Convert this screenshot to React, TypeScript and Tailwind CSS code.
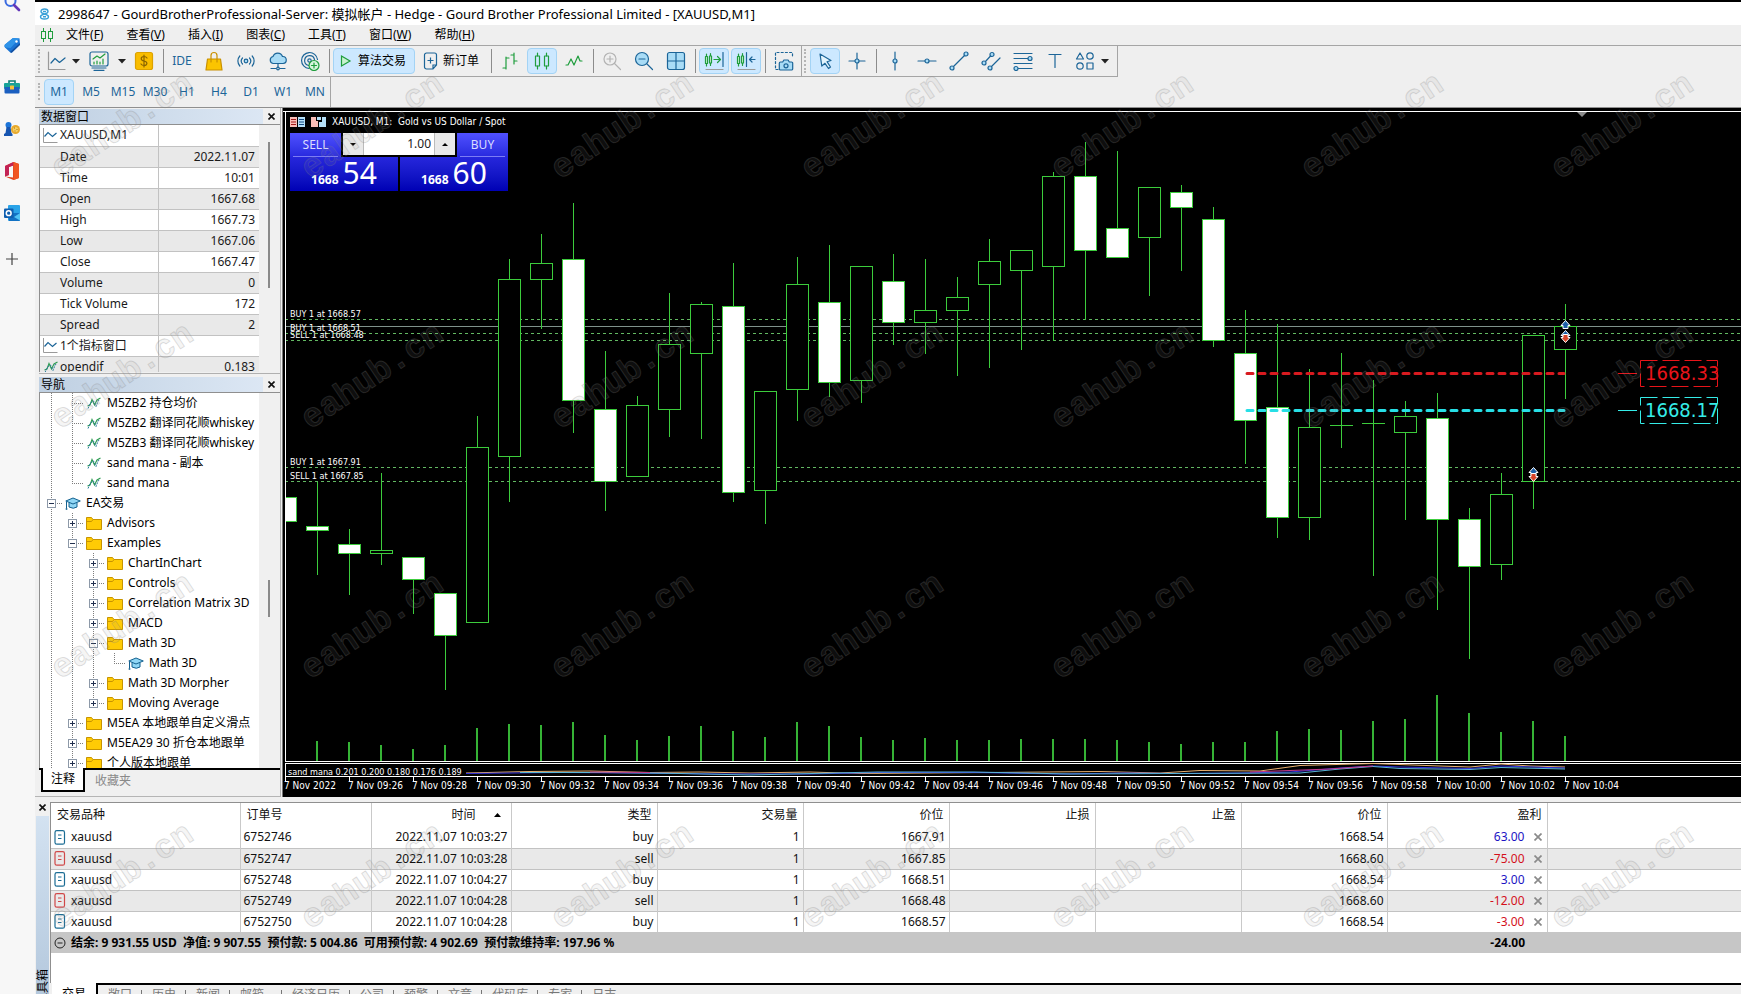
import React from "react";

const BLUE = "#1c6598";
const GREEN = "#1f9d3d";
const PALE = "#a9dcf6";

/* ---------- shared icons ---------- */

type IconProps = { children: React.ReactNode; size?: number; stroke?: string };

function Icon({ children, size = 20, stroke = BLUE }: IconProps) {
  return (
    <svg width={size} height={size} viewBox="0 0 20 20" fill="none" stroke={stroke} strokeWidth="1.2" strokeLinecap="round" strokeLinejoin="round" aria-hidden="true">
      {children}
    </svg>
  );
}

function Folder() {
  return (
    <svg width="16" height="13" viewBox="0 0 16 13" aria-hidden="true">
      <path d="M.5 12.500V.5H5.500L7 2.500H15.500V12.500Z" fill="#ffcb05" stroke="#c79400" />
      <path d="M1 4.500H5.500L7 2.500" fill="none" stroke="#c79400" />
    </svg>
  );
}

function Hat() {
  return (
    <svg width="16" height="13" viewBox="0 0 16 13" fill="#8fd6f5" stroke="#13608f" strokeLinejoin="round" aria-hidden="true">
      <path d="M4 5.500V10Q8.500 12.500 12 10V5.500" />
      <path d="M.8 4 8 1 15.300 4 8 7Z" />
      <path d="M1.500 4.500V11.500" fill="none" />
      <path d="M.7 12h1.600" strokeWidth="1.600" />
    </svg>
  );
}

function Wave() {
  return (
    <svg width="14" height="12" viewBox="0 0 14 12" fill="none" aria-hidden="true">
      <path d="M.5 9 3 8 5 2.500 7.500 8 10 3 13.500 1" stroke="#2b9a50" strokeWidth="1.100" />
      <path d="M1 11.500 3.500 6 6.500 4 9 9.500 11.500 3 12.500 4" stroke="#2a7b9b" strokeWidth="1" strokeDasharray="2 1" />
    </svg>
  );
}

function MiniChart() {
  return (
    <svg width="15" height="15" viewBox="0 0 15 15" fill="none" aria-hidden="true">
      <path d="M.5 0V14.500H14.500" stroke="#9a9a9a" />
      <path d="M1.500 8.500 5 4.500 9.500 8.500 13.500 5" stroke={BLUE} strokeWidth="1.200" />
    </svg>
  );
}

/* ---------- side rail ---------- */

function RailItem({ label, children }: { label: string; children: React.ReactNode }) {
  return (
    <button aria-label={label} className="flex h-[42px] w-6 items-center justify-center">
      {children}
    </button>
  );
}

function Rail() {
  return (
    <nav className="w-[35px] shrink-0 overflow-hidden bg-[#f7f7f7]">
      <div className="-mt-[18px] flex flex-col">
        <RailItem label="Search">
          <svg width="18" height="18" viewBox="0 0 18 18" fill="none">
            <circle cx="7.500" cy="7" r="5" stroke="#3a6be0" strokeWidth="2" />
            <path d="m11 11 5 5" stroke="#6338b8" strokeWidth="2.600" strokeLinecap="round" />
          </svg>
        </RailItem>
        <RailItem label="Shopping">
          <svg width="18" height="18" viewBox="0 0 18 18">
            <path d="M2 8.500 10 2l6.500.5.5 6L9 16.500Q8 17 7 16.200L2 11.500Q.8 10 2 8.500Z" fill="#1b74d4" />
            <path d="M2 8.500 10 2l6.500.5-9 9.500L2 11.500Q.8 10 2 8.500Z" fill="#2f93e8" />
            <path d="m7 16 10-9v2L9 16.500Q8 17 7 16Z" fill="#1450a0" />
            <circle cx="13.500" cy="5.500" r="1.200" fill="#fff" />
          </svg>
        </RailItem>
        <RailItem label="Tools">
          <svg width="18" height="16" viewBox="0 0 18 16">
            <path d="M6 4V2h6v2" fill="none" stroke="#0c7c75" strokeWidth="1.600" />
            <rect x="1" y="4" width="16" height="6" rx="1" fill="#17a398" />
            <rect x="1.500" y="8" width="15" height="6.500" rx="1" fill="#1b5fc0" />
            <rect x="7" y="6.500" width="4" height="4" rx=".6" fill="#f6c23a" />
          </svg>
        </RailItem>
        <RailItem label="Games">
          <svg width="18" height="16" viewBox="0 0 18 16">
            <circle cx="5.500" cy="4" r="3" fill="#1c74d8" />
            <path d="M3.500 6h4l1 6 1 1v2H1v-2l1.500-1Z" fill="#1655b0" />
            <circle cx="12.500" cy="8.500" r="4.500" fill="#e8a92c" />
            <circle cx="12.500" cy="8.500" r="2.600" fill="#f6cf62" />
            <path d="M11 7h1M13.500 8.500h1M11.500 10h1" stroke="#a86f10" />
          </svg>
        </RailItem>
        <RailItem label="Office">
          <svg width="18" height="20" viewBox="0 0 18 20">
            <path d="M2 5 10.500 1 16 3v14l-5.500 2L2 15.500l8 1V4.500L6 6v8l-4 1.500Z" fill="#e0401c" />
            <path d="M2 5 10.500 1v3.500L6 6v8l-4 1.500Z" fill="#c32355" />
            <path d="m10.500 1 5.500 2v14l-5.500 2Z" fill="#f05522" />
          </svg>
        </RailItem>
        <RailItem label="Outlook">
          <svg width="18" height="18" viewBox="0 0 18 18">
            <rect x="5" y="1" width="12" height="16" rx="1" fill="#2aa3e8" />
            <path d="M5 9h12v7a1 1 0 0 1-1 1H6Z" fill="#1272c4" />
            <path d="m17 9-6 4 6 3.500Z" fill="#50c3f5" />
            <rect x="1" y="4.500" width="9.500" height="9.500" rx="1" fill="#0f5fb0" />
            <circle cx="5.700" cy="9.200" r="2.400" fill="none" stroke="#fff" strokeWidth="1.500" />
          </svg>
        </RailItem>
        <div className="pt-1">
          <RailItem label="Add">
            <svg width="12" height="12" viewBox="0 0 12 12" stroke="#444" strokeWidth="1.200">
              <path d="M6 0V12M0 6H12" />
            </svg>
          </RailItem>
        </div>
      </div>
    </nav>
  );
}

/* ---------- title, menu and toolbars ---------- */

function TitleBar() {
  return (
    <header className="flex h-[25px] shrink-0 items-center gap-2 border-t-2 border-black bg-white pl-1">
      <svg width="11" height="12" viewBox="0 0 11 12" fill="none" stroke="#3aa0d8" strokeWidth="1.400" aria-hidden="true">
        <path d="M5.500 6C3.500 5.500 2 5 2 3.500S3.500 1 5.500 1 9 2 9 3.500 7.500 5.500 5.500 6 1.500 7 1.500 8.700 3.500 11 5.500 11s4-.8 4-2.300S7.500 6.500 5.500 6ZM4 3.500h3M4 8.700h3" />
      </svg>
      <h1 className="whitespace-nowrap text-[13px] leading-4 text-black">
        2998647 - GourdBrotherProfessional-Server: 模拟帐户 - Hedge - Gourd Brother Professional Limited - [XAUUSD,M1]
      </h1>
    </header>
  );
}

const MENUS: [string, string][] = [
  ["文件", "F"],
  ["查看", "V"],
  ["插入", "I"],
  ["图表", "C"],
  ["工具", "T"],
  ["窗口", "W"],
  ["帮助", "H"],
];

function MenuBar() {
  return (
    <nav className="flex h-5 shrink-0 items-center bg-[#efefef] pl-[5px] text-[12px] leading-4 text-black">
      <svg width="14" height="14" viewBox="0 0 14 14" fill="none" stroke={GREEN} aria-hidden="true">
        <path d="M3.500 0V3M3.500 11V14M10.500 0V3M10.500 11V14" />
        <rect x="1.500" y="3.500" width="4" height="7" />
        <rect x="8.500" y="3.500" width="4" height="7" />
      </svg>
      {MENUS.map(([name, key]) => (
        <button key={key} className="pl-3 pr-[11px]">
          {name}(<span className="underline">{key}</span>)
        </button>
      ))}
    </nav>
  );
}

function Tool({ label, active = false, wide = "w-[30px]", children }: { label: string; active?: boolean; wide?: string; children: React.ReactNode }) {
  return (
    <button
      aria-label={label}
      aria-pressed={active}
      className={`flex h-[26px] shrink-0 items-center justify-center rounded-sm border ${wide} ${active ? "border-[#a3d3f5] bg-[#cce8ff]" : "border-transparent"}`}
    >
      {children}
    </button>
  );
}

function Drop({ label }: { label: string }) {
  return (
    <button aria-label={label} className="flex w-2.5 items-center justify-center">
      <svg width="8" height="5" viewBox="0 0 8 5" aria-hidden="true">
        <path d="M0 0H8L4 4.500Z" fill="#222" />
      </svg>
    </button>
  );
}

function Sep() {
  return (
    <span className="flex h-6 w-1 shrink-0 justify-center">
      <span className="w-px bg-[#8c8c8c]" />
    </span>
  );
}

function Grip() {
  return <span className="h-6 w-px shrink-0 border-l-2 border-dotted border-[#b5b5b5]" />;
}

function Toolbar() {
  return (
    <div className="flex h-8 shrink-0 border-t border-[#a5a5a5] bg-[#efefef]">
      <div className="flex items-center gap-0.5 border-b border-r border-[#a5a5a5] pl-[3px] pr-[7px]">
        <Grip />
        <Tool label="Line chart" wide="w-[26px] ml-px">
          <Icon>
            <path d="M2.500 1V18.500H19" stroke="#9a9a9a" />
            <path d="m5 12 4-4.500 4.500 4L19 7" />
          </Icon>
        </Tool>
        <Drop label="Chart types" />
        <Tool label="Profiles" wide="w-8">
          <Icon>
            <rect x="1" y="1" width="18" height="14" rx="2" />
            <path d="m4 8 4-3 3 2 5-4" stroke={GREEN} />
            <path d="M5 13v-2M8 13v-3M11 13v-2M14 13V8" stroke={GREEN} />
            <path d="M3 17H17M5 19.300H15" />
          </Icon>
        </Tool>
        <Drop label="Profile list" />
        <Tool label="Dollar">
          <Icon>
            <rect x="1.500" y="1.500" width="17" height="17" rx="2" fill="#f9bd00" stroke="#dda200" />
            <path d="M13 7Q12 5.500 10 5.500 7.200 5.600 7.200 7.700 7.300 9.500 10 10 12.900 10.500 12.900 12.500 12.700 14.500 10 14.500 8 14.500 7 13M10 4V16" stroke="#8a6400" />
          </Icon>
        </Tool>
        <Sep />
        <Tool label="IDE">
          <span className="text-[12px] leading-4 text-[#1c6598]">IDE</span>
        </Tool>
        <Tool label="Market">
          <Icon stroke="#c99000">
            <path d="M3.500 8h13l1.500 11H2Z" fill="#fbc400" />
            <path d="M7 11V4.500a3 3 0 0 1 6 0V11" />
          </Icon>
        </Tool>
        <Tool label="Signals">
          <Icon>
            <circle cx="10" cy="10" r="1.800" fill={PALE} />
            <path d="M6.500 7a4.500 4.500 0 0 0 0 6M13.500 7a4.500 4.500 0 0 1 0 6M3.800 5a7.500 7.500 0 0 0 0 10M16.200 5a7.500 7.500 0 0 1 0 10" />
          </Icon>
        </Tool>
        <Tool label="Cloud">
          <Icon>
            <path d="M5 12.500a3.600 3.600 0 0 1 0-7 5 5 0 0 1 9.500 0 3.500 3.500 0 0 1 .5 7Z" fill={PALE} />
            <path d="M10 13v3.500M3 17.500h5M12 17.500h5" />
            <circle cx="10" cy="17.500" r="1.300" />
          </Icon>
        </Tool>
        <Tool label="VPS">
          <Icon>
            <path d="M9 17.500A8 8 0 1 1 17.500 8.500M8.500 14.500a5 5 0 1 1 6-6" />
            <circle cx="9.500" cy="9.500" r="1.700" />
            <circle cx="14" cy="14.500" r="5" fill="#d8f5dd" stroke={GREEN} />
            <path d="M14 12v5M11.500 14.500h5" stroke={GREEN} />
          </Icon>
        </Tool>
        <Sep />
        <button aria-pressed="true" className="flex h-[26px] w-[82px] items-center rounded-sm border border-[#a3d3f5] bg-[#cce8ff] pl-[5px] text-[12px] leading-4 text-black">
          <svg width="14" height="14" viewBox="0 0 14 14" className="mr-[5px]" aria-hidden="true">
            <path d="M2.500 2 11 7 2.500 12Z" fill="#c8f2cf" stroke={GREEN} strokeWidth="1.200" />
          </svg>
          算法交易
        </button>
        <button className="flex h-[26px] w-[70px] items-center gap-1 pl-1.5 text-[12px] leading-4 text-black">
          <svg width="16" height="18" viewBox="0 0 16 18" fill="none" stroke={BLUE} strokeWidth="1.200" aria-hidden="true">
            <path d="M10 17H3.500a2 2 0 0 1-2-2V3a2 2 0 0 1 2-2h8a2 2 0 0 1 2 2V13ZM10 17V13H13.500" />
            <path d="M7.500 5.500v6M4.500 8.500h6" />
          </svg>
          新订单
        </button>
        <Sep />
        <Tool label="Bar chart">
          <Icon stroke={GREEN}>
            <path d="M6 6V18M6 7h3M3 17h3M14 2V13M11 4h3M14 10h3" />
          </Icon>
        </Tool>
        <Tool label="Candlesticks" active>
          <Icon stroke={GREEN}>
            <path d="M5.500 2v3M5.500 15v3M14.500 2v3M14.500 15v3" />
            <rect x="3.500" y="5" width="4" height="10" />
            <rect x="12.500" y="5" width="4" height="10" />
          </Icon>
        </Tool>
        <Tool label="Line">
          <Icon stroke={GREEN}>
            <path d="M2 14h2l3-6 3 6 4-9 2 5h2" />
          </Icon>
        </Tool>
        <Sep />
        <Tool label="Zoom in">
          <Icon stroke="#b3b3b3">
            <circle cx="8" cy="8" r="6" />
            <path d="M8 5v6M5 8h6M12.500 12.500l6 6" />
          </Icon>
        </Tool>
        <Tool label="Zoom out">
          <Icon>
            <circle cx="8" cy="8" r="6.500" fill={PALE} />
            <path d="M5 8h6M13 13l5.500 5.500" />
          </Icon>
        </Tool>
        <Tool label="Tile windows">
          <Icon>
            <rect x="1.500" y="1.500" width="17" height="17" rx="2" fill={PALE} />
            <path d="M10 1.500v17M1.500 10h17" />
          </Icon>
        </Tool>
        <Sep />
        <Tool label="Auto scroll" active>
          <Icon>
            <path d="M2.500 3v12M6.500 2.500v12M10 8.500h6.500M13.500 5.500l3 3-3 3" stroke={GREEN} />
            <path d="M1.500 5.500h2v7h-2ZM5.500 5h2v7h-2Z" stroke={GREEN} fill="#d8f5dd" />
            <path d="M19 1.500v14" />
            <path d="M2 18.500h17" stroke="#9a9a9a" />
          </Icon>
        </Tool>
        <Tool label="Chart shift" active>
          <Icon>
            <path d="M2.500 3v12M6.500 2.500v12" stroke={GREEN} />
            <path d="M1.500 5.500h2v7h-2ZM5.500 5h2v7h-2Z" stroke={GREEN} fill="#d8f5dd" />
            <path d="M10.500 1.500v14M19 8.500h-5.500M16 6l-2.500 2.500L16 11" />
            <path d="M2 18.500h17" stroke="#9a9a9a" />
          </Icon>
        </Tool>
        <Sep />
        <Tool label="Screenshot">
          <Icon>
            <path d="M4 18.500H1.500v-17h17V7" strokeDasharray="2 2.200" />
            <path d="M6.500 11h2.200l1.200-2h4.200l1.200 2h2.200a1.200 1.200 0 0 1 1.200 1.200v5.600a1.200 1.200 0 0 1-1.200 1.200H6.500a1.200 1.200 0 0 1-1.200-1.200v-5.600A1.200 1.200 0 0 1 6.500 11Z" fill={PALE} />
            <circle cx="12" cy="14.800" r="2" />
          </Icon>
        </Tool>
        <span className="h-[30px] w-px bg-[#a5a5a5]" />
        <Grip />
        <Tool label="Cursor" active wide="w-[30px] ml-0.5">
          <Icon>
            <path d="m5 3 11 6.500-4 1.200 3.500 5.300-2 1.500-3.500-5.200L6.800 15Z" fill="#e3f4fd" />
          </Icon>
        </Tool>
        <Tool label="Crosshair">
          <Icon>
            <path d="M10 2v6M10 12v6M2 10h6M12 10h6" />
            <circle cx="10" cy="10" r="2" fill={PALE} />
          </Icon>
        </Tool>
        <Sep />
        <Tool label="Vertical line">
          <Icon>
            <path d="M10 1v7M10 12v7" />
            <circle cx="10" cy="10" r="2" fill={PALE} />
          </Icon>
        </Tool>
        <Tool label="Horizontal line">
          <Icon>
            <path d="M1 10h7M12 10h7" />
            <circle cx="10" cy="10" r="2" fill={PALE} />
          </Icon>
        </Tool>
        <Tool label="Trend line">
          <Icon>
            <path d="M4.500 15.500 15.500 4.500" />
            <circle cx="3" cy="17" r="2" fill={PALE} />
            <circle cx="17" cy="3" r="2" fill={PALE} />
          </Icon>
        </Tool>
        <Tool label="Channel">
          <Icon>
            <path d="m4.500 10.500 5-5.500M10.500 15.500 19 7" />
            <circle cx="3" cy="12" r="2" fill={PALE} />
            <circle cx="11" cy="3.500" r="2" fill={PALE} />
            <circle cx="9" cy="17" r="2" fill={PALE} />
          </Icon>
        </Tool>
        <Tool label="Fibonacci">
          <Icon>
            <path d="M1 2.500h18M1 7.500h14M1 12.500h18M5 17.500h14" />
            <circle cx="17" cy="7.500" r="2" fill={PALE} />
            <circle cx="3" cy="17.500" r="2" fill={PALE} />
          </Icon>
        </Tool>
        <Tool label="Text">
          <Icon>
            <path d="M4 3.500h12M10 3.500v13" />
          </Icon>
        </Tool>
        <Tool label="Shapes" wide="w-[26px]">
          <Icon>
            <path d="m5 2 3.500 6h-7Z" />
            <circle cx="15" cy="5" r="3.200" />
            <circle cx="5" cy="15" r="3.200" />
            <rect x="12" y="12" width="6" height="6" />
          </Icon>
        </Tool>
        <Drop label="More shapes" />
      </div>
    </div>
  );
}

const FRAMES = ["M1", "M5", "M15", "M30", "H1", "H4", "D1", "W1", "MN"];

function Timeframes() {
  return (
    <div className="flex h-[30px] shrink-0 bg-[#efefef]">
      <div className="flex items-center gap-0.5 border-r border-[#a5a5a5] pl-[3px] text-[12px] leading-4 text-[#1c6598]">
        <div className="pr-0.5">
          <Grip />
        </div>
        {FRAMES.map((f) => (
          <button key={f} aria-pressed={f === "M1"} className={`flex h-[26px] w-[30px] items-center justify-center rounded-sm border ${f === "M1" ? "border-[#a3d3f5] bg-[#cce8ff]" : "border-transparent"}`}>
            {f}
          </button>
        ))}
      </div>
    </div>
  );
}

/* ---------- left panels ---------- */

function CloseMark() {
  return (
    <svg width="7" height="7" viewBox="0 0 7 7" stroke="#111" strokeWidth="1.600" aria-hidden="true">
      <path d="m.5.5 6 6M6.500.5l-6 6" />
    </svg>
  );
}

function PanelHeader({ title }: { title: string }) {
  return (
    <div className="flex h-4 shrink-0 items-center border-b border-[#8f8f8f]">
      <h2 className="h-full flex-1 bg-gradient-to-r from-[#bfd0e2] to-[#dce7f4] pl-0.5 text-[12px] leading-[15px] text-black">{title}</h2>
      <button aria-label={`关闭${title}`} className="flex w-[17px] items-center justify-center">
        <CloseMark />
      </button>
    </div>
  );
}

const DATA: [string, string, string?][] = [
  ["XAUUSD,M1", "", "chart"],
  ["Date", "2022.11.07"],
  ["Time", "10:01"],
  ["Open", "1667.68"],
  ["High", "1667.73"],
  ["Low", "1667.06"],
  ["Close", "1667.47"],
  ["Volume", "0"],
  ["Tick Volume", "172"],
  ["Spread", "2"],
  ["1个指标窗口", "", "chart"],
  ["opendif", "0.183", "wave"],
];

function DataWindow() {
  return (
    <section className="flex h-[265px] shrink-0 flex-col border-b border-[#b0b0b0]">
      <PanelHeader title="数据窗口" />
      <div className="flex min-h-0 flex-1 overflow-hidden pb-px">
        <div className="flex-1 overflow-hidden border-l border-[#8f8f8f] bg-white">
          <table className="w-full table-fixed border-collapse text-[12px] leading-4 text-[#1a1a1a]">
            <colgroup>
              <col className="w-[118px]" />
              <col />
            </colgroup>
            <tbody>
              {DATA.map(([name, value, icon], i) => (
                <tr key={name} className={`h-[21px] border-b border-[#c2c2c2] ${i % 2 ? "bg-[#e9e9e9]" : "bg-white"}`}>
                  <th scope="row" className="border-r border-[#c2c2c2] p-0 text-left font-normal">
                    <div className="flex h-5 items-center">
                      <span className="flex w-5 justify-center pl-px">
                        {icon === "chart" && <MiniChart />}
                        {icon === "wave" && <Wave />}
                      </span>
                      {name}
                    </div>
                  </th>
                  <td className="py-0 pl-0 pr-1 text-right">{value}</td>
                </tr>
              ))}
            </tbody>
          </table>
        </div>
        <div className="flex w-[21px] justify-center bg-[#f0f0f0] pt-[17px]">
          <span className="-ml-0.5 h-[146px] w-0.5 bg-[#8a8a8a]" />
        </div>
      </div>
    </section>
  );
}

type Cell = "v" | "t" | "l" | "+" | "-" | "+l";

function TreeCell({ kind }: { kind: Cell }) {
  const hasBox = kind.startsWith("+") || kind.startsWith("-");
  const bottom = kind === "l" || kind === "+l" ? 10 : 20;
  return (
    <svg width="21" height="20" viewBox="0 0 21 20" fill="none" shapeRendering="crispEdges" className="shrink-0" aria-hidden="true">
      <path d={`M10.500 0V${bottom}`} stroke="#7d7d7d" strokeDasharray="1 1" />
      {kind !== "v" && <path d="M10 10.500H21" stroke="#7d7d7d" strokeDasharray="1 1" />}
      {hasBox && (
        <>
          <rect x="6.500" y="6.500" width="8" height="8" fill="#fff" stroke="#8d99a8" />
          <path d={kind.startsWith("+") ? "M8 10.500h5M10.500 8v5" : "M8 10.500h5"} stroke="#22304f" />
        </>
      )}
    </svg>
  );
}

const TREE: { cells: Cell[]; icon: "wave" | "hat" | "folder"; text: string }[] = [
  { cells: ["v", "t"], icon: "wave", text: "M5ZB2 持仓均价" },
  { cells: ["v", "t"], icon: "wave", text: "M5ZB2 翻译同花顺whiskey" },
  { cells: ["v", "t"], icon: "wave", text: "M5ZB3 翻译同花顺whiskey" },
  { cells: ["v", "t"], icon: "wave", text: "sand mana - 副本" },
  { cells: ["v", "l"], icon: "wave", text: "sand mana" },
  { cells: ["-"], icon: "hat", text: "EA交易" },
  { cells: ["v", "+"], icon: "folder", text: "Advisors" },
  { cells: ["v", "-"], icon: "folder", text: "Examples" },
  { cells: ["v", "v", "+"], icon: "folder", text: "ChartInChart" },
  { cells: ["v", "v", "+"], icon: "folder", text: "Controls" },
  { cells: ["v", "v", "+"], icon: "folder", text: "Correlation Matrix 3D" },
  { cells: ["v", "v", "+"], icon: "folder", text: "MACD" },
  { cells: ["v", "v", "-"], icon: "folder", text: "Math 3D" },
  { cells: ["v", "v", "v", "l"], icon: "hat", text: "Math 3D" },
  { cells: ["v", "v", "+"], icon: "folder", text: "Math 3D Morpher" },
  { cells: ["v", "v", "+l"], icon: "folder", text: "Moving Average" },
  { cells: ["v", "+"], icon: "folder", text: "M5EA 本地跟单自定义滑点" },
  { cells: ["v", "+"], icon: "folder", text: "M5EA29 30 折仓本地跟单" },
  { cells: ["v", "+"], icon: "folder", text: "个人版本地跟单" },
];

function Navigator() {
  return (
    <section className="flex min-h-0 flex-1 flex-col pt-[3px]">
      <PanelHeader title="导航" />
      <div className="flex min-h-0 flex-1 border-b-2 border-black">
        <ul className="min-w-0 flex-1 overflow-hidden border-l border-[#8f8f8f] bg-white pl-px">
          {TREE.map((row, i) => (
            <li key={i} className="flex h-5 items-center whitespace-nowrap text-[12px] leading-4 text-black">
              {row.cells.map((c, j) => (
                <TreeCell key={j} kind={c} />
              ))}
              <span className="flex w-[21px] shrink-0 justify-center">
                {row.icon === "folder" ? <Folder /> : row.icon === "hat" ? <Hat /> : <Wave />}
              </span>
              <span className="pl-[3px]">{row.text}</span>
            </li>
          ))}
        </ul>
        <div className="flex w-[21px] items-center justify-center bg-[#f0f0f0] pt-9">
          <span className="-ml-0.5 h-[37px] w-0.5 bg-[#8a8a8a]" />
        </div>
      </div>
      <div className="flex h-[26px] shrink-0 items-start pl-0.5 text-[12px] leading-4">
        <button className="-mt-0.5 h-6 w-[44px] border-2 border-t-0 border-black bg-white text-black">注释</button>
        <button className="ml-2.5 h-[22px] text-[#8a8a8a]">收藏夹</button>
      </div>
    </section>
  );
}

/* ---------- chart ---------- */

/* centre x, body top, body bottom, high, low, falling */
const CANDLES: [number, number, number, number, number, boolean][] = [
  [285, 497, 521, 497, 521, true],
  [317, 526, 530, 482, 575, true],
  [349, 544, 553, 529, 595, true],
  [381, 550, 553, 473, 565, false],
  [413, 557, 579, 557, 614, true],
  [445, 593, 635, 593, 690, true],
  [477, 447, 622, 416, 622, false],
  [509, 279, 456, 259, 502, false],
  [541, 263, 279, 234, 329, false],
  [573, 259, 400, 203, 433, true],
  [605, 409, 481, 351, 511, true],
  [637, 405, 476, 396, 476, false],
  [669, 344, 409, 293, 437, false],
  [701, 304, 353, 302, 439, false],
  [733, 306, 492, 263, 502, true],
  [765, 391, 490, 391, 524, false],
  [797, 284, 389, 257, 421, false],
  [829, 302, 382, 245, 397, true],
  [861, 266, 380, 266, 403, false],
  [893, 281, 322, 254, 345, true],
  [925, 310, 322, 259, 354, false],
  [957, 297, 310, 277, 376, false],
  [989, 261, 284, 239, 368, false],
  [1021, 250, 270, 250, 350, false],
  [1053, 176, 266, 172, 341, false],
  [1085, 176, 250, 142, 320, true],
  [1117, 228, 257, 151, 257, true],
  [1149, 187, 237, 187, 296, false],
  [1181, 192, 207, 185, 271, true],
  [1213, 219, 340, 207, 347, true],
  [1245, 353, 420, 310, 464, true],
  [1277, 407, 517, 324, 538, true],
  [1309, 427, 517, 369, 540, false],
  [1341, 425, 425, 353, 448, false],
  [1373, 423, 423, 380, 576, false],
  [1405, 416, 432, 401, 520, false],
  [1437, 418, 519, 393, 610, true],
  [1469, 519, 566, 508, 659, true],
  [1501, 494, 564, 473, 580, false],
  [1533, 335, 481, 335, 509, false],
  [1565, 326, 349, 304, 399, false],
];

const VOLUME_TOPS = [
  741, 742, 745, 749, 745, 728, 724, 725, 722, 735, 740, 736, 726, 731, 737, 722, 726, 737, 740, 738, 740, 740, 739, 739, 739, 740, 742, 744, 742, 742, 731, 729, 730, 721, 719, 695, 713, 732, 721, 736,
];

const ORDER_LINES = [319, 333, 340, 467, 481];

const ORDER_LABELS: [number, string][] = [
  [317, "BUY 1 at 1668.57"],
  [331, "BUY 1 at 1668.51"],
  [338, "SELL 1 at 1668.48"],
  [465, "BUY 1 at 1667.91"],
  [479, "SELL 1 at 1667.85"],
];

const TIMES = [
  "7 Nov 2022", "7 Nov 09:26", "7 Nov 09:28", "7 Nov 09:30", "7 Nov 09:32", "7 Nov 09:34", "7 Nov 09:36",
  "7 Nov 09:38", "7 Nov 09:40", "7 Nov 09:42", "7 Nov 09:44", "7 Nov 09:46", "7 Nov 09:48", "7 Nov 09:50",
  "7 Nov 09:52", "7 Nov 09:54", "7 Nov 09:56", "7 Nov 09:58", "7 Nov 10:00", "7 Nov 10:02", "7 Nov 10:04",
];

function Marker({ x, y, down = false, color }: { x: number; y: number; down?: boolean; color: string }) {
  return (
    <g transform={`translate(${x} ${y})${down ? " rotate(180)" : ""}`}>
      <path d="M0-4.500 4.500.5H2.500V3.500H-2.500V.5H-4.500Z" fill={color} stroke="#fff" />
    </g>
  );
}

function PriceTag({ y, color, text }: { y: number; color: string; text: string }) {
  return (
    <g stroke={color} fill="none">
      <path d={`M1618 ${y}.5H1637`} />
      <rect x="1640.500" y={y - 13 + 0.5} width="77" height="26" strokeDasharray="17 5" />
      <text x="1645" y={y + 7} fill={color} stroke="none" className="text-[20px]">
        {text}
      </text>
    </g>
  );
}

function Chart() {
  return (
    <svg width="100%" height="100%" className="block font-['DejaVu_Sans_Condensed','DejaVu_Sans',sans-serif]" role="img" aria-label="XAUUSD M1">
      <g transform="translate(-283 -108)">
        <g shapeRendering="crispEdges" fill="none">
          <path d="M285 326.500H3000" stroke="#7f918b" />
          {ORDER_LINES.map((y) => (
            <path key={y} d={`M285 ${y}.5H3000`} stroke="#62b862" strokeDasharray="3 3" />
          ))}
          {VOLUME_TOPS.map((top, i) => (
            <path key={i} d={`M${317 + i * 32} ${top}V761`} stroke="#35b335" strokeWidth="2" />
          ))}
          {CANDLES.map(([x, top, bottom, high, low, falling]) => (
            <g key={x} stroke="#3ccc3c">
              <path d={`M${x}.5 ${high}V${low}`} />
              {bottom > top ? (
                <rect x={x - 11 + 0.5} y={top + 0.5} width="22" height={bottom - top} fill={falling ? "#fff" : "#000"} />
              ) : (
                <path d={`M${x - 11} ${top}.5H${x + 12}`} />
              )}
            </g>
          ))}
          <path d="M283 108H285V797H283Z" fill="#000" />
          <path d="M283 111.500H3000M285.500 111V761.500H3000M285 763.500H3000M285.500 763V776.500H3000" stroke="#fff" />
          {TIMES.map((t, i) => (
            <path key={t} d={`M${285 + i * 64}.5 777v4`} stroke="#fff" />
          ))}
        </g>
        <g fill="none" strokeWidth="3" strokeDasharray="6 6" strokeLinecap="round">
          <path d="M1247 373.500H1564" stroke="#d81a1f" />
          <path d="M1247 410.500H1564" stroke="#27dfe6" />
        </g>
        <g fill="none">
          <path d="M466 773 530 771.500 590 771 650 772.500 700 772 750 773 810 772 860 773.500 990 772.500 1100 771.500 1160 773 1200 770.500 1260 771 1300 765.500 1373 763.500 1440 766 1470 767 1501 764 1530 766 1565 767" stroke="#e8b070" />
          <path d="M466 773.500 560 772.500 640 773 720 774 810 774 877 772.500 974 772.500 1060 774 1125 773 1180 773.500 1240 773 1290 772 1340 768 1373 766 1400 767 1470 768.500 1501 766 1565 768" stroke="#3434e0" />
          <path d="M520 772.500 600 772.500 680 773.500 750 775 812 773.500 877 772 974 772 1070 774 1170 773.500 1300 773 1340 769 1373 766.500 1400 768.500 1470 769.500 1501 767.500 1565 769" stroke="#58b4d8" />
          <path d="M590 772 650 772.500M1250 772 1330 769 1373 766" stroke="#c43a8a" />
        </g>
        <g fill="#fff" className="text-[10px]">
          {ORDER_LABELS.map(([y, t]) => (
            <text key={t} x="290" y={y} className="text-[9px]">
              {t}
            </text>
          ))}
          <text x="288" y="775" className="text-[9px]">
            sand mana 0.201 0.200 0.180 0.176 0.189
          </text>
          {TIMES.map((t, i) => (
            <text key={t} x={284 + i * 64} y="789">
              {t}
            </text>
          ))}
        </g>
        <PriceTag y={373} color="#e8141a" text="1668.33" />
        <PriceTag y={410} color="#35ece8" text="1668.17" />
        <Marker x={1565.5} y={325} color="#1c5fa8" />
        <Marker x={1565.5} y={335} color="#1c5fa8" />
        <Marker x={1565.5} y={338} color="#d8452a" down />
        <Marker x={1533.5} y={472} color="#1c5fa8" />
        <Marker x={1533.5} y={477} color="#d8452a" down />
        <path d="M1577 112H1587L1582 117Z" fill="#8a8a8a" />
      </g>
    </svg>
  );
}

function QuoteButton({ big }: { big: string }) {
  return (
    <button className="flex h-[34px] flex-1 items-baseline justify-center gap-1 bg-gradient-to-b from-[#2626dc] to-[#0000b4] text-white">
      <span className="text-[12px] font-bold leading-4">1668</span>
      <span className="text-[30px] leading-[32px]">{big}</span>
    </button>
  );
}

function TradePanel() {
  return (
    <div className="absolute left-[7px] top-[5px] flex w-[218px] flex-col">
      <div className="mb-[3px] flex h-[17px] items-center gap-1.5">
        <svg width="15" height="10" viewBox="0 0 15 10" aria-hidden="true">
          <path d="M0 0h7v10H0Z" fill="#f9bdb6" />
          <path d="M8 0h7v10H8Z" fill="#b5e0f8" />
          <path d="M1 2.500h5M1 5h5M1 7.500h5" stroke="#a01818" />
          <path d="M9 2.500h5M9 5h5M9 7.500h5" stroke="#144a80" />
        </svg>
        <svg width="15" height="10" viewBox="0 0 15 10" aria-hidden="true">
          <path d="M0 0h5v4h2v6H0Z" fill="#f9bdb6" />
          <path d="M6 0h4v3H6ZM11 0h4v10H8V5h3Z" fill="#b5e0f8" />
        </svg>
        <h2 className="whitespace-pre font-['DejaVu_Sans_Condensed','DejaVu_Sans',sans-serif] text-[10px] leading-3 text-white">XAUUSD, M1:  Gold vs US Dollar / Spot</h2>
      </div>
      <div className="flex h-6 bg-black">
        <button className="w-[51px] shrink-0 bg-gradient-to-b from-[#5050ff] to-[#2828de] px-[3px] text-[12px] leading-[23px] text-[#dcdcff]">
          <span className="block border-b border-[#7c7cf5]">SELL</span>
        </button>
        <div className="mx-0.5 flex h-[22px] min-w-0 flex-1 bg-white">
          <button aria-label="Decrease volume" className="flex w-[21px] shrink-0 items-center justify-center border-r border-[#bbb] bg-[#e9e9e9]">
            <svg width="6" height="3" viewBox="0 0 6 3" aria-hidden="true"><path d="M0 0H6L3 3Z" /></svg>
          </button>
          <input aria-label="Volume" defaultValue="1.00" className="w-0 min-w-0 flex-1 bg-white pr-[3px] text-right text-[12px] leading-4 text-[#222] outline-none" />
          <button aria-label="Increase volume" className="flex w-[21px] shrink-0 items-center justify-center border-l border-[#bbb] bg-[#e9e9e9]">
            <svg width="6" height="3" viewBox="0 0 6 3" aria-hidden="true"><path d="M0 3H6L3 0Z" /></svg>
          </button>
        </div>
        <button className="w-[51px] shrink-0 bg-gradient-to-b from-[#5050ff] to-[#2828de] px-[3px] text-[12px] leading-[23px] text-[#dcdcff]">
          <span className="block border-b border-[#7c7cf5]">BUY</span>
        </button>
      </div>
      <div className="flex gap-0.5">
        <QuoteButton big="54" />
        <QuoteButton big="60" />
      </div>
    </div>
  );
}

/* ---------- terminal ---------- */

const ORDERS: [string, string, string, string, string, string][] = [
  ["6752746", "2022.11.07 10:03:27", "buy", "1667.91", "1668.54", "63.00"],
  ["6752747", "2022.11.07 10:03:28", "sell", "1667.85", "1668.60", "-75.00"],
  ["6752748", "2022.11.07 10:04:27", "buy", "1668.51", "1668.54", "3.00"],
  ["6752749", "2022.11.07 10:04:28", "sell", "1668.48", "1668.60", "-12.00"],
  ["6752750", "2022.11.07 10:04:28", "buy", "1668.57", "1668.54", "-3.00"],
];

const TABS = ["敞口", "历史", "新闻", "邮箱", "经济日历", "公司", "预警", "文章", "代码库", "专家", "日志"];

function Terminal() {
  const head = "border-r border-[#c9c9c9] py-0 pl-0 pr-[5px] text-right font-normal";
  const cell = "border-r border-[#c9c9c9] py-0 pl-0 pr-[3px] text-right";
  return (
    <section className="flex h-48 shrink-0 overflow-hidden bg-[#f0f0f0]">
      <div className="mx-px flex w-[13px] shrink-0 flex-col">
        <button aria-label="关闭工具箱" className="flex h-[14px] items-start justify-center pt-0.5">
          <CloseMark />
        </button>
        <div className="flex min-h-0 flex-1 flex-col items-center justify-end bg-gradient-to-b from-[#d3e2f1] to-[#b4c8dd]">
          <h2 className="-mb-[11px] rotate-180 whitespace-nowrap text-[12px] leading-[13px] text-black [text-orientation:sideways] [writing-mode:vertical-rl]">工具箱</h2>
        </div>
      </div>
      <div className="flex min-w-0 flex-1 flex-col">
        <div className="h-[181px] shrink-0 border-l border-t border-[#8f8f8f] bg-white">
          <table className="w-full table-fixed border-collapse text-[12px] leading-4 text-[#111]">
            <colgroup>
              <col className="w-[189px]" />
              <col className="w-[131px]" />
              <col className="w-[140px]" />
              <col className="w-[146px]" />
              <col className="w-[146px]" />
              <col className="w-[146px]" />
              <col className="w-[146px]" />
              <col className="w-[146px]" />
              <col className="w-[146px]" />
              <col className="w-[160px]" />
              <col />
            </colgroup>
            <thead>
              <tr className="h-6">
                <th className="border-r border-[#c9c9c9] py-0 pl-1.5 text-left font-normal">交易品种</th>
                <th className="border-r border-[#c9c9c9] py-0 pl-1.5 text-left font-normal">订单号</th>
                <th className="border-r border-[#c9c9c9] p-0 font-normal">
                  <div className="flex items-center justify-end gap-[18px] pr-[10px]">
                    时间
                    <svg width="7" height="4" viewBox="0 0 7 4" aria-hidden="true"><path d="M0 4H7L3.500 0Z" /></svg>
                  </div>
                </th>
                <th className={head}>类型</th>
                <th className={head}>交易量</th>
                <th className={head}>价位</th>
                <th className={head}>止损</th>
                <th className={head}>止盈</th>
                <th className={head}>价位</th>
                <th className={head}>盈利</th>
                <td />
              </tr>
            </thead>
            <tbody>
              {ORDERS.map(([id, time, side, open, now, profit], i) => (
                <tr key={id} className={`h-[21px] ${i < 4 ? "border-b border-[#c2c2c2]" : ""} ${i % 2 ? "bg-[#e9e9e9]" : "bg-white"}`}>
                  <td className="border-r border-[#c9c9c9] p-0">
                    <div className="flex h-5 items-center gap-[5px] pl-[3px]">
                      <svg width="12" height="15" viewBox="0 0 12 15" fill="none" stroke={side === "buy" ? "#1b6c94" : "#d04848"} aria-hidden="true">
                        <rect x="1" y=".7" width="9.500" height="13.500" rx="1.800" strokeWidth="1.200" />
                        <path d="M4 5h3.500M4 8.500h3.500" />
                      </svg>
                      xauusd
                    </div>
                  </td>
                  <td className="border-r border-[#c9c9c9] py-0 pl-[3px]">{id}</td>
                  <td className={cell}>{time}</td>
                  <td className={cell}>{side}</td>
                  <td className={cell}>1</td>
                  <td className={cell}>{open}</td>
                  <td className={cell} />
                  <td className={cell} />
                  <td className={cell}>{now}</td>
                  <td className="border-r border-[#c9c9c9] p-0">
                    <div className={`flex items-center justify-end gap-[9px] pr-[5px] ${profit.startsWith("-") ? "text-[#d4101c]" : "text-[#1c14c4]"}`}>
                      {profit}
                      <button aria-label={`平仓 ${id}`}>
                        <svg width="8" height="8" viewBox="0 0 8 8" stroke="#8a8a8a" strokeWidth="1.700" aria-hidden="true">
                          <path d="m.5.5 7 7M7.500.5l-7 7" />
                        </svg>
                      </button>
                    </div>
                  </td>
                  <td />
                </tr>
              ))}
            </tbody>
            <tfoot>
              <tr className="h-[21px] bg-[#c6c6c6] font-bold text-black">
                <td colSpan={9} className="p-0">
                  <div className="flex items-center gap-[5px] whitespace-pre pl-[3px]">
                    <svg width="12" height="12" viewBox="0 0 12 12" fill="none" stroke="#222" aria-hidden="true">
                      <circle cx="6" cy="6" r="5" />
                      <path d="M3.500 6h5" />
                    </svg>
                    {"结余: 9 931.55 USD  净值: 9 907.55  预付款: 5 004.86  可用预付款: 4 902.69  预付款维持率: 197.96 %"}
                  </div>
                </td>
                <td className="py-0 pl-0 pr-[22px] text-right">-24.00</td>
                <td />
              </tr>
            </tfoot>
          </table>
        </div>
        <div className="flex h-[22px] shrink-0 text-[12px] leading-[22px] text-[#777]">
          <button className="ml-0.5 w-[46px] border-r-2 border-black bg-white text-black">交易</button>
          <div className="flex flex-1 items-center border-t-2 border-black">
            {TABS.map((t) => (
              <button
                key={t}
                className={`relative pl-[10px] after:absolute after:right-0 after:top-1.5 after:h-3 after:w-px after:bg-[#777] last:after:hidden ${t === "邮箱" ? "pr-[18px]" : "pr-[10px]"}`}
              >
                {t}
              </button>
            ))}
          </div>
        </div>
      </div>
    </section>
  );
}

/* ---------- watermark ---------- */

function Watermark() {
  const cols = [0, 1, 2, 3, 4, 5, 6];
  const rows = [0, 1, 2, 3];
  return (
    <svg width="100%" height="100%" className="pointer-events-none absolute inset-0 font-['Liberation_Mono',monospace] text-[34px] font-bold" aria-hidden="true">
      <g fill="rgba(150,150,150,0.1)" stroke="rgba(130,130,130,0.26)">
        {rows.map((r) =>
          cols.map((c) => (
            <text key={`${r}-${c}`} transform={`translate(${60 + c * 250} ${180 + r * 250}) rotate(-34)`}>
              eahub.cn
            </text>
          )),
        )}
      </g>
    </svg>
  );
}

export default function App() {
  return (
    <div className="relative flex h-screen overflow-hidden bg-[#f0f0f0] font-['Noto_Sans','Noto_Sans_CJK_SC',sans-serif]">
      <Rail />
      <div className="flex min-w-0 flex-1 flex-col">
        <TitleBar />
        <MenuBar />
        <Toolbar />
        <Timeframes />
        <div className="flex min-h-0 flex-1 border-t border-[#8f8f8f]">
          <aside className="mr-px flex w-[246px] shrink-0 flex-col border-b border-r border-[#b5b5b5] pl-1 pt-px">
            <DataWindow />
            <Navigator />
          </aside>
          <main className="relative min-w-0 flex-1 overflow-hidden border-l border-[#777] bg-black">
            <Chart />
            <TradePanel />
          </main>
        </div>
        <div className="h-[5px] shrink-0" />
        <Terminal />
      </div>
      <Watermark />
    </div>
  );
}
